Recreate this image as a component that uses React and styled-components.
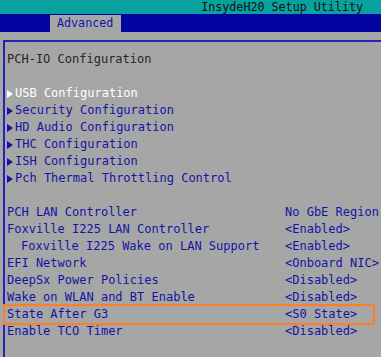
import React from 'react'
import styled, { createGlobalStyle } from 'styled-components'

const GlobalStyle = createGlobalStyle`
  html, body {
    margin: 0;
    padding: 0;
    background: #a6a6a6;
  }
  body {
    font-family: "DejaVu Sans Mono", "Liberation Mono", monospace;
    font-size: 12px;
    overflow: hidden;
  }
`

const Screen = styled.div`
  width: 381px;
  height: 357px;
  display: flex;
  flex-direction: column;
  background: #a6a6a6;
`

const TitleBar = styled.div`
  height: 14px;
  background: #08a29e;
  color: #101010;
  font-size: 11.7px;
  line-height: 14px;
  text-align: right;
  padding-right: 18px;
  white-space: pre;
`

const MenuBar = styled.div`
  height: 18px;
  background: #0404a0;
  display: flex;
  align-items: flex-end;
  padding-left: 50px;
`

const Tab = styled.div`
  width: 64px;
  height: 17px;
  background: #a6a6a6;
  color: #1414a8;
  font-size: 11.7px;
  line-height: 17px;
  padding-left: 7px;
`

const Panel = styled.div`
  flex: 1;
  margin-top: 8px;
  margin-left: 3px;
  border-top: 2px solid #2424b4;
  border-left: 2px solid #2424b4;
  padding-top: 9px;
`

const Row = styled.div`
  display: grid;
  grid-template-columns: 278px 1fr;
  height: 17px;
  line-height: 17px;
  padding-left: 2px;
  margin-right: 8px;
  color: ${p => (p.$active ? '#ffffff' : p.$heading ? '#262626' : '#1414a4')};
  white-space: pre;
  outline: ${p => (p.$focus ? '2px solid #ff7e22' : 'none')};
  outline-offset: 0;
`

const Label = styled.span`
  display: flex;
  align-items: center;
  padding-left: ${p => p.$indent || 0}px;
`

const Marker = styled.span`
  display: inline-block;
  width: 0;
  height: 0;
  border-left: 6px solid currentColor;
  border-top: 4px solid transparent;
  border-bottom: 4px solid transparent;
  margin-right: 2px;
`

const Value = styled.span``

const submenus = [
  'USB Configuration',
  'Security Configuration',
  'HD Audio Configuration',
  'THC Configuration',
  'ISH Configuration',
  'Pch Thermal Throttling Control'
]

const settings = [
  { label: 'PCH LAN Controller', value: 'No GbE Region' },
  { label: 'Foxville I225 LAN Controller', value: '<Enabled>' },
  { label: 'Foxville I225 Wake on LAN Support', value: '<Enabled>', indent: 14 },
  { label: 'EFI Network', value: '<Onboard NIC>' },
  { label: 'DeepSx Power Policies', value: '<Disabled>' },
  { label: 'Wake on WLAN and BT Enable', value: '<Disabled>' },
  { label: 'State After G3', value: '<S0 State>', focus: true },
  { label: 'Enable TCO Timer', value: '<Disabled>' }
]

export default function App() {
  return (
    <Screen>
      <GlobalStyle />
      <TitleBar>InsydeH20 Setup Utility</TitleBar>
      <MenuBar>
        <Tab>Advanced</Tab>
      </MenuBar>
      <Panel>
        <Row $heading>
          <Label>PCH-IO Configuration</Label>
        </Row>
        <Row />
        {submenus.map((name, i) => (
          <Row key={name} $active={i === 0}>
            <Label>
              <Marker />
              {name}
            </Label>
          </Row>
        ))}
        <Row />
        {settings.map(({ label, value, indent, focus }) => (
          <Row key={label} $focus={focus}>
            <Label $indent={indent}>{label}</Label>
            <Value>{value}</Value>
          </Row>
        ))}
      </Panel>
    </Screen>
  )
}
